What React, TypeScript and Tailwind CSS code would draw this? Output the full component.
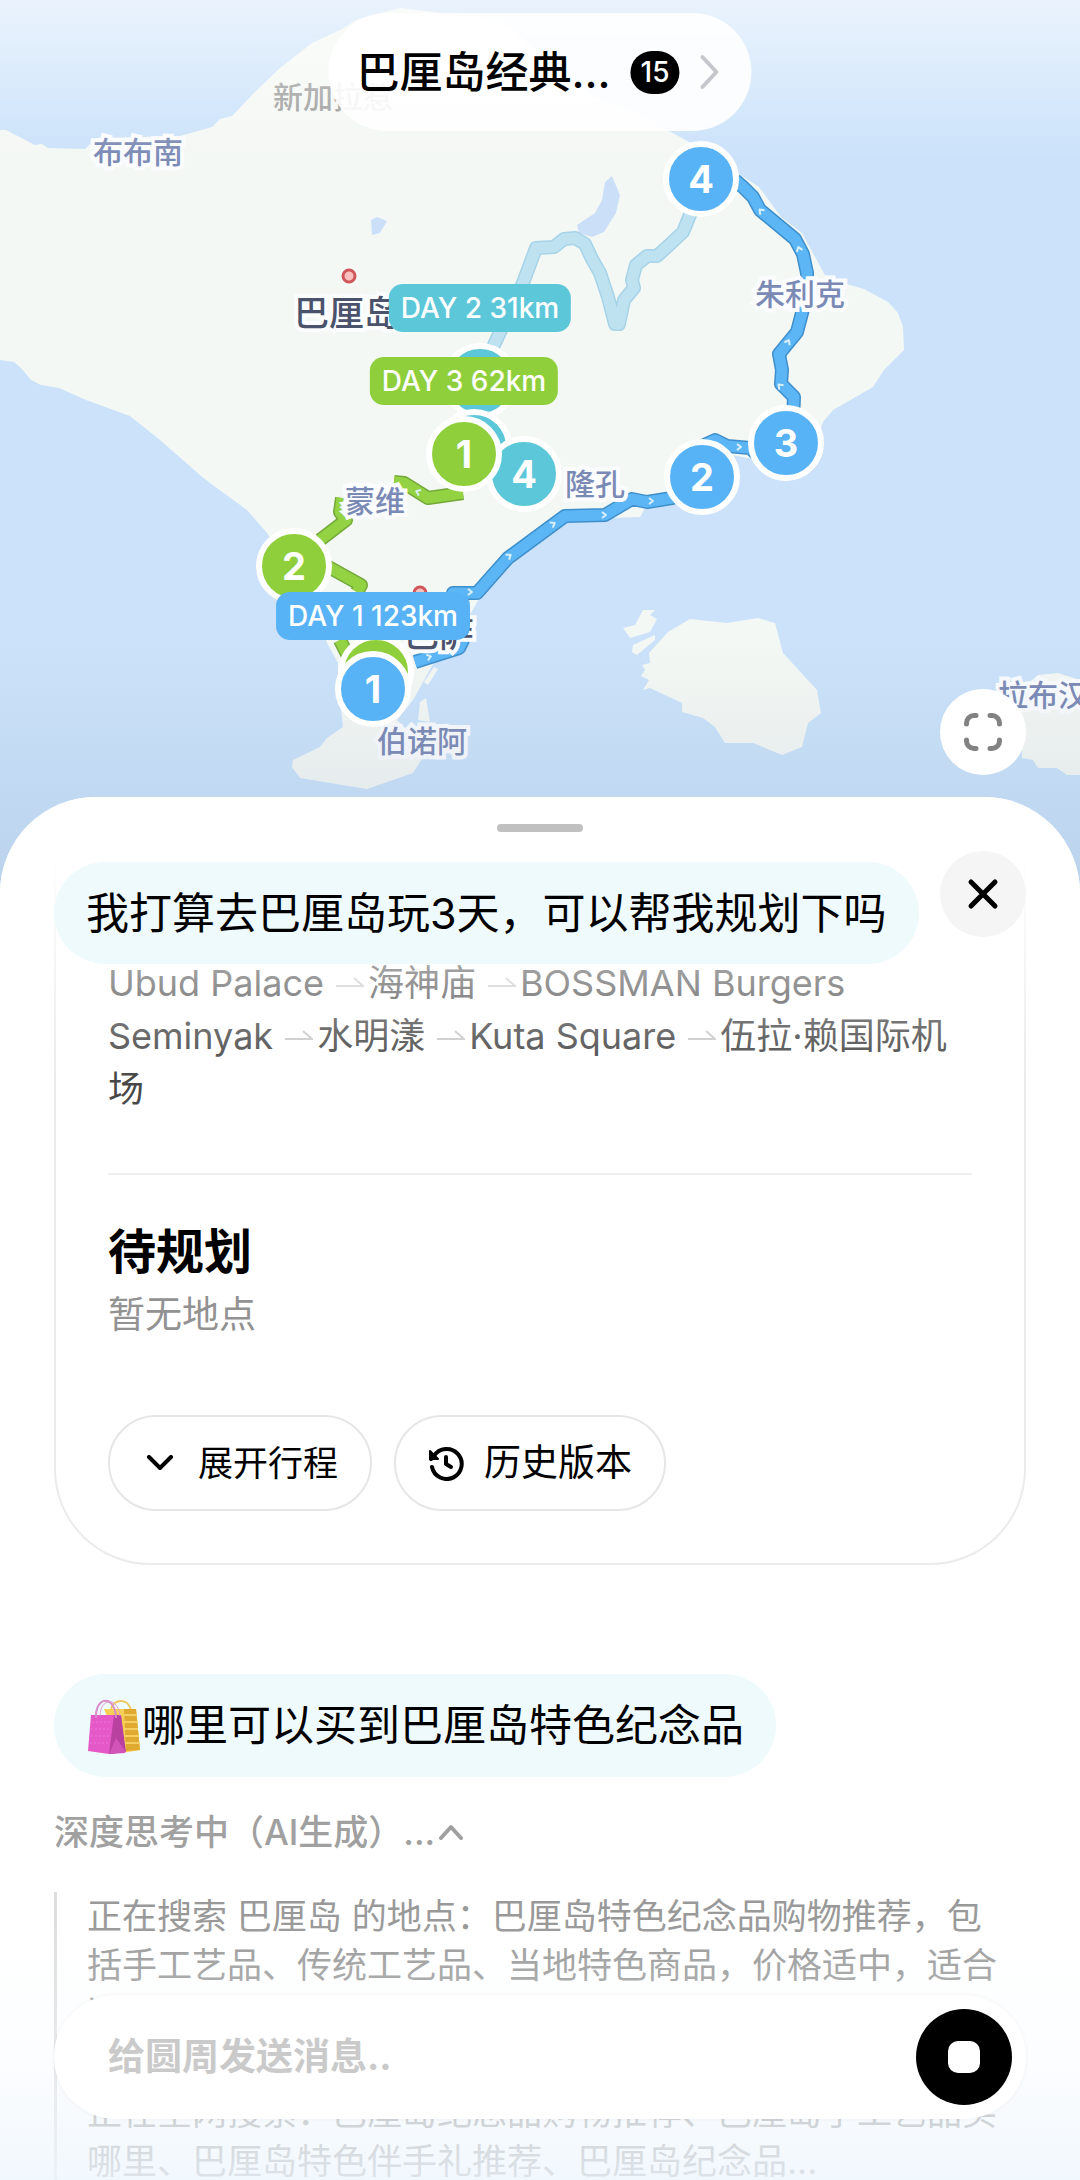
import { Fragment } from "react";

type Tone = "blue" | "teal" | "green";

const toneBg: Record<Tone, string> = {
  blue: "bg-[#57b3f5]",
  teal: "bg-[#5cc7d9]",
  green: "bg-[#8fcf3c]",
};

interface Pin {
  x: number;
  y: number;
  label: string;
  tone: Tone;
}

// Later pins are painted over earlier ones
const pins: Pin[] = [
  { x: 480, y: 381, label: "", tone: "teal" },
  { x: 474, y: 447, label: "", tone: "teal" },
  { x: 524, y: 474, label: "4", tone: "teal" },
  { x: 464, y: 454, label: "1", tone: "green" },
  { x: 294, y: 566, label: "2", tone: "green" },
  { x: 376, y: 672, label: "", tone: "green" },
  { x: 701, y: 179, label: "4", tone: "blue" },
  { x: 702, y: 477, label: "2", tone: "blue" },
  { x: 786, y: 443, label: "3", tone: "blue" },
  { x: 373, y: 689, label: "1", tone: "blue" },
];

const dayTags: Pin[] = [
  { x: 480, y: 308, label: "DAY 2 31km", tone: "teal" },
  { x: 464, y: 381, label: "DAY 3 62km", tone: "green" },
  { x: 373, y: 616, label: "DAY 1 123km", tone: "blue" },
];

const towns = [
  { x: 93, y: 152, name: "布布南" },
  { x: 755, y: 294, name: "朱利克" },
  { x: 345, y: 501, name: "蒙维" },
  { x: 565, y: 484, name: "隆孔" },
  { x: 377, y: 741, name: "伯诺阿" },
  { x: 998, y: 695, name: "拉布汉" },
];

const cities = [
  { x: 294, y: 313, name: "巴厘岛" },
  { x: 369, y: 634, name: "登巴萨" },
];

const routes = {
  faded:
    "M692 210L683 232L667 247L657 256L647 256L636 265L632 280L634 288L624 300L619 324L615 324L608 297L600 273L592 259L585 244L575 238L564 239L554 247L536 248L523 283L494 345L480 380",
  blue: [
    "M735 180L743 187L753 197L760 210L795 239L803 254L807 273L807 293L802 313L797 332L788 343L779 354L782 370L781 384L794 397L793 420",
    "M702 446L715 440L727 446L750 448L765 462",
    "M690 493L672 498L647 502L632 499L605 515L565 516L508 558L477 593L453 593L462 620L463 640L459 648L415 662",
  ],
  green: [
    "M394 482L404 483L428 498L463 493",
    "M342 498L340 512L346 520L320 540",
    "M325 565L361 585L357 592",
    "M340 640L350 660",
  ],
};

// Direction marks along the routes: x, y, rotation
const routeMarks = [
  [761, 211, -135],
  [799, 249, -110],
  [788, 342, -60],
  [780, 386, -135],
  [739, 447, 0],
  [651, 501, 0],
  [604, 515, 0],
  [553, 524, -30],
  [509, 556, -35],
  [470, 592, 0],
  [429, 657, -15],
  [418, 492, 200],
];

const stops = ["Ubud Palace", "海神庙", "BOSSMAN Burgers Seminyak", "水明漾", "Kuta Square", "伍拉·赖国际机场"];

function MapCanvas() {
  return (
    <svg className="block w-full" viewBox="0 0 1080 900" aria-hidden="true">
      <rect width="1080" height="900" fill="#cbe2fa" />
      <g fill="#f4f8f4">
        <path d="M0 130L6 130L35 145L42 144L48 148L85 149L97 138L180 136L212 127L220 119L232 116L255 92L280 68L312 43L340 30L358 19L400 8L500 20L560 70L595 97L636 113L667 130L691 143L759 187L781 217L802 233L815 257L826 277L850 285L864 289L888 302L898 313L903 327L904 350L884 370L873 387L833 410L823 422L817 440L747 458L733 455L673 503L645 508L640 517L610 518L600 522L570 521L512 562L480 597L467 620L457 653L433 664L413 700L397 720L423 745L423 757L413 773L367 789L300 778L292 767L293 760L320 747L327 738L343 727L340 700L338 663L327 643L317 610L267 533L247 510L210 483L200 475L160 440L130 416L86 400L59 388L41 385L31 380L21 368L14 362L0 360Z" />
        <path d="M643 610L655 610L650 615L657 619L650 632L630 638L623 628L635 625Z" />
        <path d="M633 645L655 635L655 640L637 655L632 652Z" />
        <path d="M690 619L727 623L758 618L775 623L783 653L817 690L821 713L808 723L802 747L782 755L753 743L725 743L715 727L703 718L682 712L682 703L650 688L643 690L649 680L641 676L645 670L642 665L650 663L649 653L668 632Z" />
        <path d="M1020 690L1038 675L1058 673L1080 680V775L1067 775L1057 768L1038 768L1033 760L1022 758Z" />
        <path d="M420 702L426 698L430 722L418 720Z" />
        <path d="M424 682L434 667L438 669L428 685Z" />
      </g>
      <g fill="#cbe0f8">
        <path d="M612 176L605 182L602 200L595 213L577 225L579 233L592 237L604 232L616 213L620 195Z" />
        <path d="M371 220L377 217L387 221L380 233L372 235Z" />
      </g>

      <g fill="none" strokeLinejoin="round">
        <path d={routes.faded} stroke="#a6d3e8" strokeWidth="14" />
        <path d={routes.faded} stroke="#bfe2f1" strokeWidth="11" />
        {routes.blue.map((d) => (
          <Fragment key={d}>
            <path d={d} stroke="#3e8fcb" strokeWidth="14" />
            <path d={d} stroke="#5cb6f6" strokeWidth="11" />
          </Fragment>
        ))}
        {routes.green.map((d) => (
          <Fragment key={d}>
            <path d={d} stroke="#74a93a" strokeWidth="14" />
            <path d={d} stroke="#93d242" strokeWidth="11" />
          </Fragment>
        ))}
        {routeMarks.map(([x, y, r]) => (
          <path
            key={`${x}-${y}`}
            d="M-2 -3L2 0L-2 3"
            transform={`translate(${x} ${y}) rotate(${r})`}
            stroke="#d9effc"
            strokeWidth="2"
          />
        ))}
      </g>

      <g fill="#f9c0bd" stroke="#d0565a" strokeWidth="3">
        <circle cx="349" cy="276" r="6" />
        <circle cx="420" cy="593" r="6" />
      </g>
    </svg>
  );
}

function MapView() {
  return (
    <section aria-label="地图" className="relative overflow-hidden">
      <MapCanvas />

      <span className="absolute left-[273px] top-[77px] text-[30px] font-medium leading-10 text-[#999]">新加拉惹</span>
      {towns.map((town) => (
        <span
          key={town.name}
          className="absolute -translate-y-1/2 whitespace-nowrap text-[30px] font-medium leading-10 text-[#7b8ab5] [paint-order:stroke_fill] [-webkit-text-stroke:8px_#fafcfe]"
          style={{ left: town.x, top: town.y }}
        >
          {town.name}
        </span>
      ))}
      {cities.map((city) => (
        <span
          key={city.name}
          className="absolute -translate-y-1/2 whitespace-nowrap text-[35px] font-medium leading-10 text-[#4b526b] [paint-order:stroke_fill] [-webkit-text-stroke:8px_#fafcfe]"
          style={{ left: city.x, top: city.y }}
        >
          {city.name}
        </span>
      ))}

      <div className="absolute inset-x-0 top-0 h-40 bg-linear-to-b from-white/60 to-transparent" />
      <div className="absolute inset-x-0 bottom-0 top-[640px] bg-linear-to-b from-transparent to-[#7890b4]/20" />

      {pins.map((pin) => (
        <span
          key={`${pin.x}-${pin.y}`}
          className={`absolute flex size-[76px] -translate-1/2 items-center justify-center rounded-full border-6 border-white text-[38px] font-bold text-white ${toneBg[pin.tone]}`}
          style={{ left: pin.x, top: pin.y }}
        >
          {pin.label}
        </span>
      ))}
      {dayTags.map((tag) => (
        <span
          key={tag.label}
          className={`absolute flex h-12 -translate-1/2 items-center whitespace-nowrap rounded-[14px] px-3 text-[28px] font-medium text-white ${toneBg[tag.tone]}`}
          style={{ left: tag.x, top: tag.y }}
        >
          {tag.label}
        </span>
      ))}

      <button
        type="button"
        className="absolute left-1/2 top-[13px] flex h-[118px] -translate-x-1/2 items-center rounded-full bg-white/90 pl-7 pr-8 text-black"
      >
        <span className="text-[43px] font-medium">巴厘岛经典...</span>
        <span className="ml-5 flex h-[43px] w-[49px] items-center justify-center rounded-full bg-black text-[28px] font-medium text-white">
          15
        </span>
        <svg className="ml-5 h-9 w-5" viewBox="0 0 20 36" fill="none" aria-hidden="true">
          <path d="M3 3L17 18L3 33" stroke="#c4c7cc" strokeWidth="4" strokeLinecap="round" strokeLinejoin="round" />
        </svg>
      </button>

      <button
        type="button"
        aria-label="全屏"
        className="absolute right-[54px] top-[689px] flex size-[86px] items-center justify-center rounded-full bg-white"
      >
        <svg className="size-[38px]" viewBox="0 0 38 38" fill="none" aria-hidden="true">
          <path
            d="M12 2.500H10A7.500 7.500 0 0 0 2.500 10V11M26 2.500H28A7.500 7.500 0 0 1 35.500 10V11M12 35.500H10A7.500 7.500 0 0 1 2.500 28V27M26 35.500H28A7.500 7.500 0 0 0 35.500 28V27"
            stroke="#828282"
            strokeWidth="5"
            strokeLinecap="round"
          />
        </svg>
      </button>
    </section>
  );
}

function StopArrow() {
  return (
    <svg className="ml-3 mr-1 inline h-5 w-7 align-baseline" viewBox="0 0 28 20" fill="none" aria-hidden="true">
      <path d="M0 10H27L18 2" stroke="#c8c8c8" strokeWidth="2" />
    </svg>
  );
}

function ShoppingBags() {
  return (
    <svg className="h-14 w-14 shrink-0" viewBox="0 0 54 56" fill="none" aria-hidden="true">
      <path d="M24 12C25 1 41 -1 44 12" stroke="#f0c95c" strokeWidth="2" />
      <path d="M17 11H49L53 52L35 55Z" fill="#f7cf55" />
      <path d="M37 11H49L53 52L39 53Z" fill="#e0a92f" />
      <path d="M37 17H50M37 24H51M37 31H51M38 38H52M38 45H52" stroke="#f6cf62" strokeWidth="2" />
      <path d="M4 17H34L38 55L22 56L1 53Z" fill="#e558c8" />
      <path d="M27 17H34L39 54L22 56Z" fill="#b8409f" />
      <path d="M29 40L39 54L22 56Z" fill="#d254b8" />
      <path d="M5 24H25M4 31H24M4 38H24M3 45H23" stroke="#ee74d6" strokeWidth="1" strokeDasharray="2 2" />
      <path d="M9 20C8 -2 28 -4 29 20" stroke="#d78bc8" strokeWidth="2" />
      <path d="M13 18C13 0 31 -2 33 18" stroke="#e0a0d2" strokeWidth="1" />
    </svg>
  );
}

function PlanCard() {
  return (
    <article className="rounded-b-[96px] border-x-2 border-b-2 border-[#ebebeb] px-[52px] pb-[52px] pt-[93px]">
      <p className="text-[36px] leading-[53px] text-[#484848]">
        {stops.map((stop, i) => (
          <Fragment key={stop}>
            {i > 0 && <StopArrow />}
            {stop}
          </Fragment>
        ))}
      </p>
      <hr className="mt-[57px] border-t-2 border-[#f0f0f0]" />
      <h2 className="mt-[45px] text-[48px] font-bold leading-[64px] text-black">待规划</h2>
      <p className="mt-1 text-[37px] leading-[53px] text-[#929292]">暂无地点</p>
      <div className="mt-[74px] flex gap-[22px]">
        <button
          type="button"
          className="flex h-24 items-center gap-6 rounded-full border-2 border-[#e6e6e6] pl-9 pr-8 text-[35px] text-black"
        >
          <svg className="h-4 w-7" viewBox="0 0 28 16" fill="none" aria-hidden="true">
            <path d="M3 2L14 13L25 2" stroke="currentColor" strokeWidth="4" strokeLinecap="round" strokeLinejoin="round" />
          </svg>
          展开行程
        </button>
        <button
          type="button"
          className="flex h-24 items-center gap-5 rounded-full border-2 border-[#e6e6e6] px-8 text-[37px] text-black"
        >
          {/* Clock with a counter-clockwise arrow */}
          <svg className="size-9" viewBox="0 0 36 36" fill="none" aria-hidden="true">
            <g stroke="currentColor" strokeWidth="4" strokeLinecap="round" strokeLinejoin="round">
              <path d="M4 22A15 15 0 1 0 6 11L3 14" />
              <path d="M18 12V19L23 22" />
            </g>
            <path d="M2 6L2 14L10 14Z" fill="currentColor" stroke="currentColor" strokeWidth="2" strokeLinejoin="round" />
          </svg>
          历史版本
        </button>
      </div>
    </article>
  );
}

function Thinking() {
  return (
    <section>
      <button
        type="button"
        className="mt-[31px] flex items-center gap-1 text-[35px] font-medium leading-[48px] text-[#a0a0a0]"
      >
        深度思考中（AI生成）...
        <svg className="h-4 w-6" viewBox="0 0 24 16" fill="none" aria-hidden="true">
          <path d="M2 14L12 3L22 14" stroke="currentColor" strokeWidth="4" strokeLinecap="round" strokeLinejoin="round" />
        </svg>
      </button>
      <div className="mt-9 space-y-[49px] border-l-3 border-[#dedede] pl-[30px] pr-4 text-[35px] leading-[49px] text-[#999]">
        <p>正在搜索 巴厘岛 的地点：巴厘岛特色纪念品购物推荐，包括手工艺品、传统工艺品、当地特色商品，价格适中，适合送礼</p>
        <p>正在全网搜索：巴厘岛纪念品购物推荐、巴厘岛手工艺品买哪里、巴厘岛特色伴手礼推荐、巴厘岛纪念品...</p>
      </div>
    </section>
  );
}

function SheetHeader() {
  return (
    <header className="absolute inset-x-0 top-0 z-10 px-[54px] pt-[27px]">
      <div className="mx-auto h-2 w-[86px] rounded-full bg-[#c0c0c0]" />
      <div className="mt-[19px] flex items-start justify-between">
        <p className="mt-[11px] rounded-full bg-[#effafd] px-8 text-[43px] leading-[102px] text-black">
          我打算去巴厘岛玩3天，可以帮我规划下吗
        </p>
        <button
          type="button"
          aria-label="关闭"
          className="flex size-[86px] items-center justify-center rounded-full bg-[#f5f5f5]"
        >
          <svg className="size-8" viewBox="0 0 32 32" aria-hidden="true">
            <path d="M4 4L28 28M28 4L4 28" stroke="#000" strokeWidth="5" strokeLinecap="round" />
          </svg>
        </button>
      </div>
    </header>
  );
}

function Composer() {
  return (
    <footer className="absolute inset-x-0 bottom-0 z-10 bg-linear-to-b from-white/0 via-[#f8fbfe]/40 to-[#eef6fd]/80 px-[54px] pb-[61px] pt-[75px]">
      <form className="flex h-[124px] items-center rounded-full bg-white pl-[54px] pr-[14px] shadow-[0_0_4px_rgba(0,0,0,0.05)]">
        <input
          type="text"
          aria-label="消息"
          placeholder="给圆周发送消息.."
          className="min-w-0 flex-1 text-[37px] font-bold outline-none placeholder:text-[#cacaca]"
        />
        <button
          type="button"
          aria-label="停止"
          className="flex size-24 items-center justify-center rounded-full bg-black"
        >
          <span className="size-8 rounded-[10px] bg-white" />
        </button>
      </form>
    </footer>
  );
}

export default function App() {
  return (
    <div className="relative flex h-screen flex-col overflow-hidden bg-[#cbe2fa] font-['Inter','Noto_Sans_CJK_SC',sans-serif]">
      <MapView />
      <main className="relative -mt-[103px] min-h-0 flex-1 overflow-hidden rounded-t-[96px] bg-white">
        <SheetHeader />
        <div className="px-[54px] pt-[67px]">
          <PlanCard />
          <p className="mt-[109px] flex w-fit items-center rounded-full bg-[#effafd] px-8 text-[43px] leading-[103px] text-black">
            <ShoppingBags />
            哪里可以买到巴厘岛特色纪念品
          </p>
          <Thinking />
        </div>
        {/* Scrolled content fades out under the header */}
        <div className="absolute inset-x-0 top-0 h-[280px] bg-linear-to-b from-white from-20% to-white/0" />
        <Composer />
      </main>
    </div>
  );
}
